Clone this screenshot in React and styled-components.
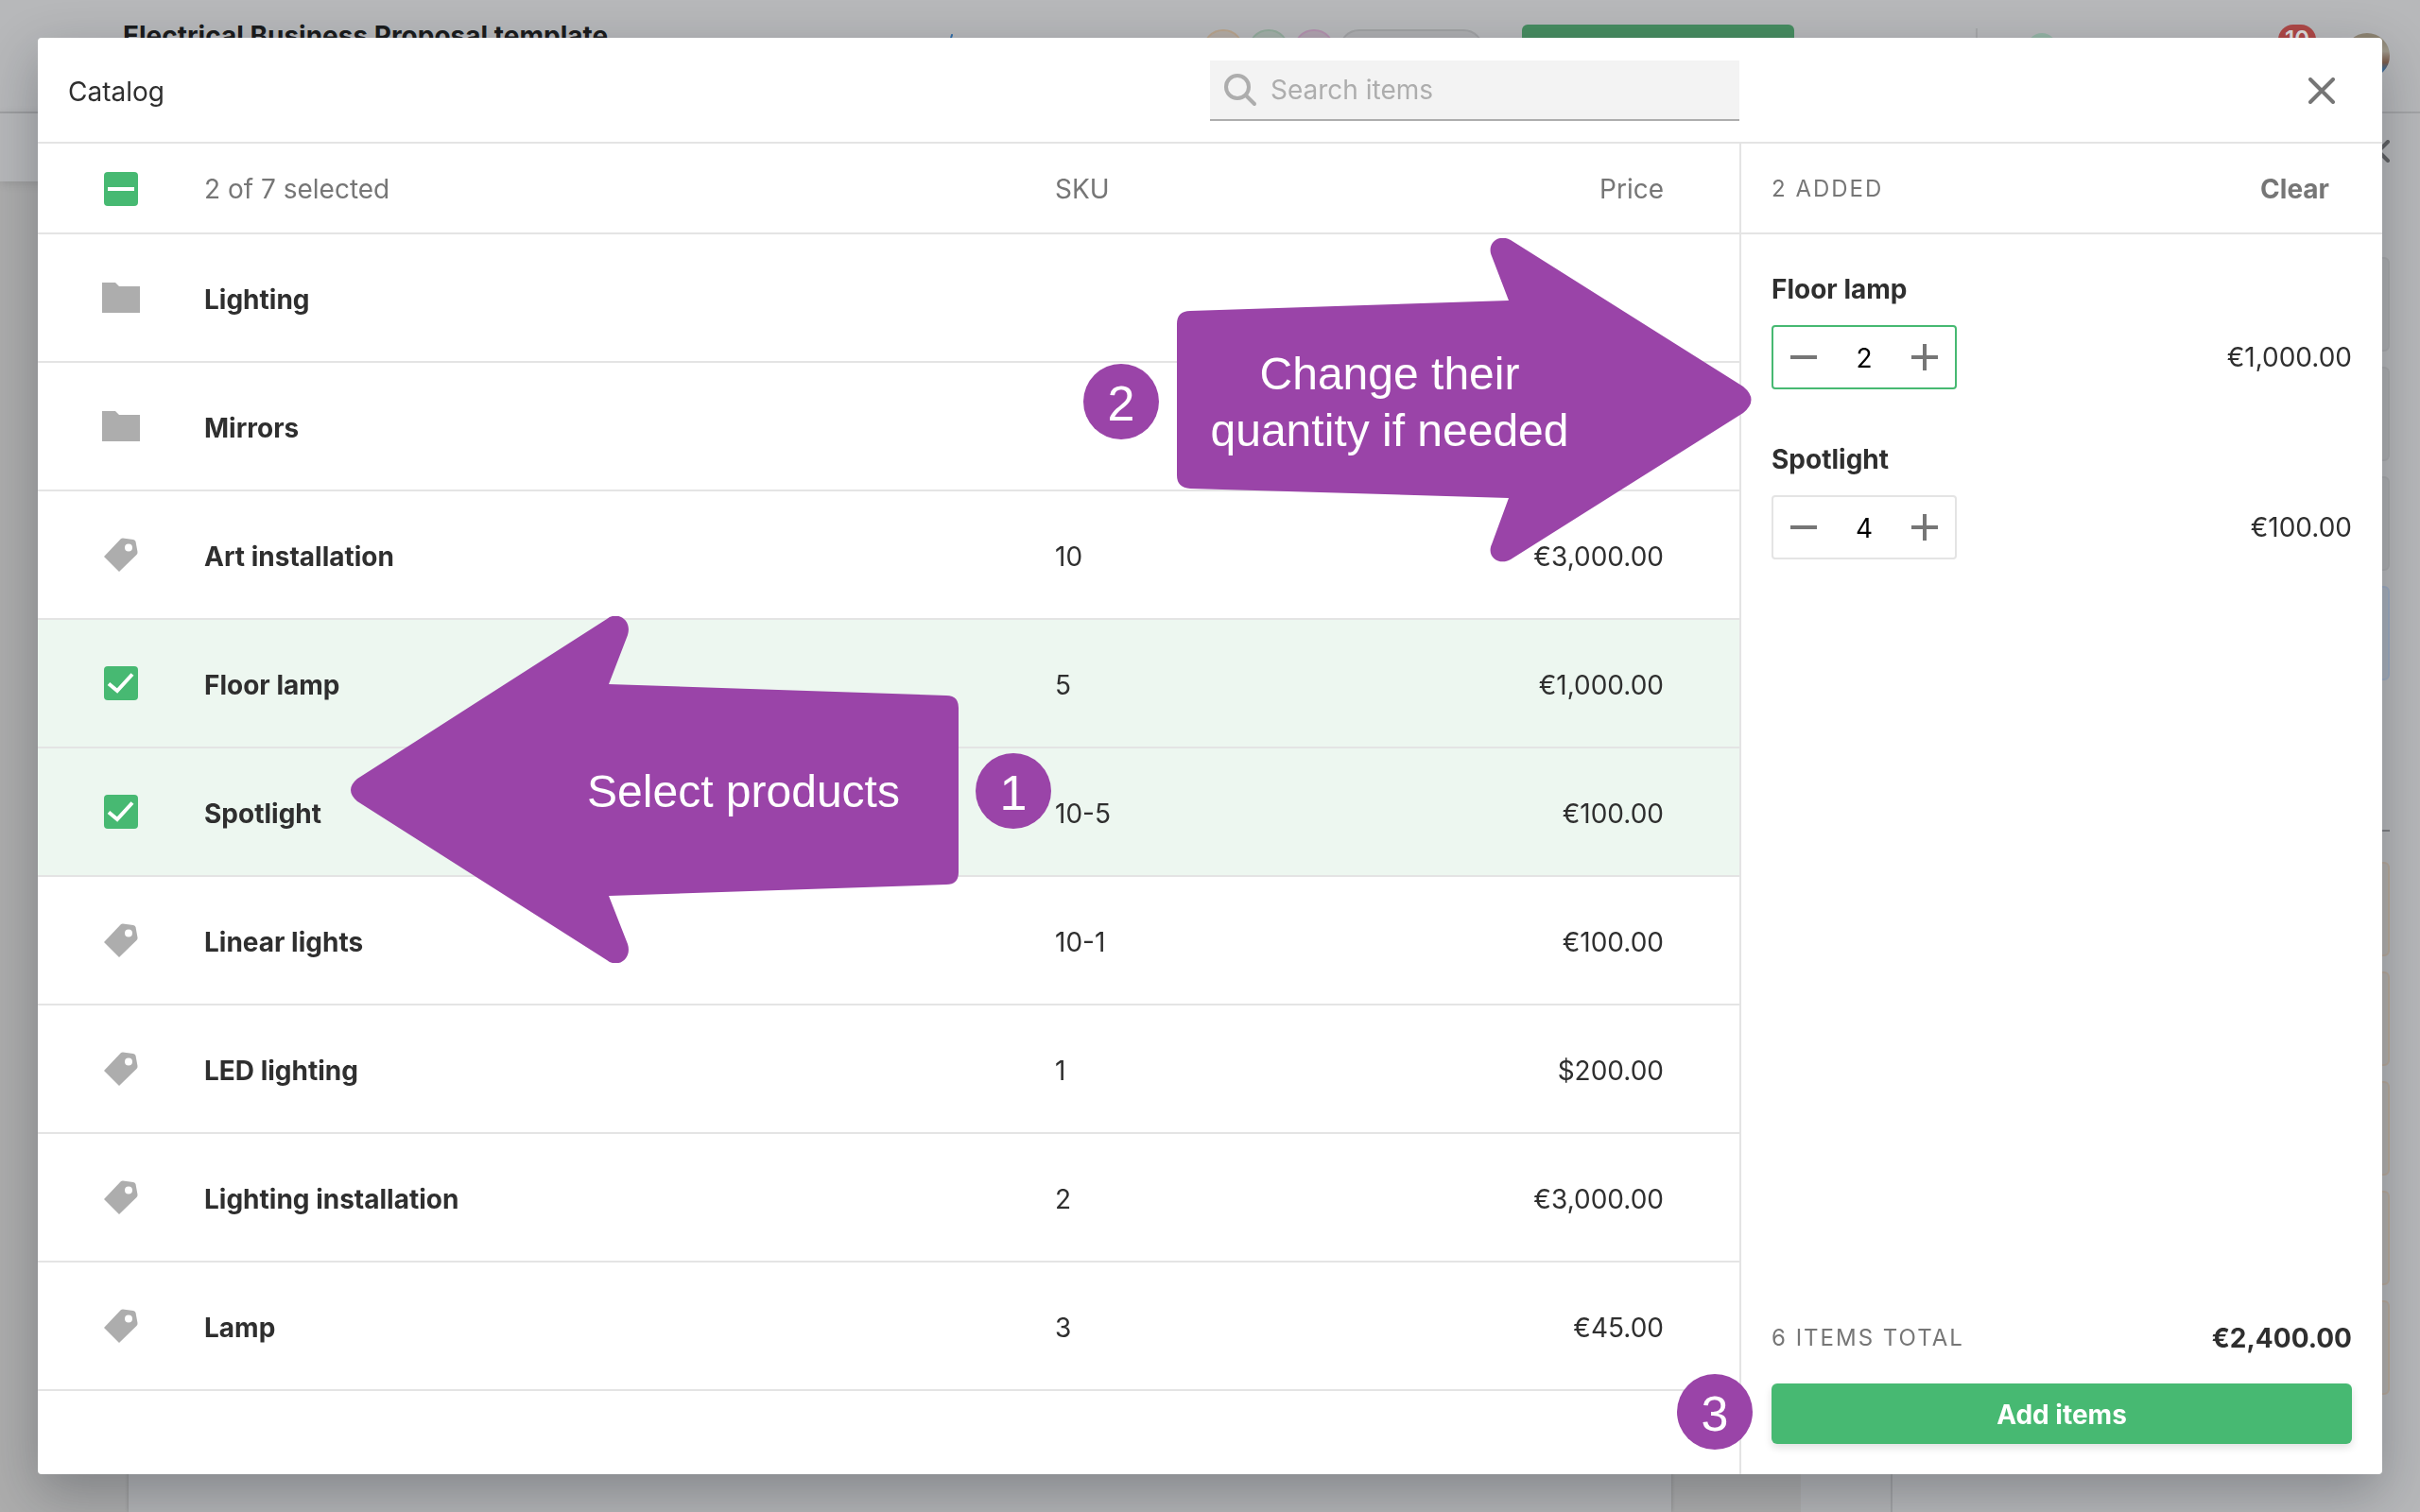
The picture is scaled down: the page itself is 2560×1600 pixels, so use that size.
import React, { useState } from 'react';
import styled, { createGlobalStyle } from 'styled-components'

const color = {
  text: '#2f2f2f',
  muted: '#767676',
  icon: '#adadad',
  line: '#e4e4e4',
  green: '#47b972',
  selected: '#edf7f0',
  purple: '#9a44a8',
}

const GlobalStyle = createGlobalStyle`
  * {
    box-sizing: border-box;
  }
  body {
    margin: 0;
    overflow: hidden;
    color: ${color.text};
    font-family: Inter, "Liberation Sans", sans-serif;
    font-size: 28px;
    line-height: 40px;
  }
  button, input {
    font: inherit;
    color: inherit;
    border: 0;
    padding: 0;
    margin: 0;
    background: none;
  }
`

/* ---------- editor behind the dialog ---------- */

const Editor = styled.div`
  height: 100vh;
  display: flex;
  flex-direction: column;
  isolation: isolate;
  background: #b7b8ba;
`
const TopBar = styled.header`
  height: 120px;
  flex: none;
  display: flex;
  align-items: flex-start;
  padding: 16px 32px 0 130px;
  border-bottom: 2px solid #a3a4a6;
  overflow: hidden;
`
const DocTitle = styled.div`
  width: 866px;
  padding-top: 2px;
  font-weight: 700;
  color: #1a1b1c;
`
const EditMark = styled.svg`
  width: 20px;
  height: 20px;
  margin-top: 20px;
`
const TopTools = styled.div`
  display: flex;
  align-items: flex-start;
  margin-left: auto;
  padding-top: 10px;
`
const Person = styled.span`
  width: 44px;
  height: 44px;
  margin: 5px 4px 0 0;
  border-radius: 50%;
  border: 2px solid ${p => p.$line};
  background: ${p => p.$fill};
`
const Pill = styled.span`
  width: 154px;
  height: 44px;
  margin: 5px 40px 0 0;
  border-radius: 22px;
  border: 2px solid #a1a2a4;
  background: #adaeb0;
`
const SendButton = styled.span`
  width: 288px;
  height: 64px;
  border-radius: 6px;
  background: #468c60;
`
const Divider = styled.span`
  width: 2px;
  height: 60px;
  margin: 4px 52px 0 192px;
  background: #a7a8aa;
`
const StatusDot = styled.span`
  width: 32px;
  height: 32px;
  margin: 9px 234px 0 0;
  border-radius: 50%;
  background: #94b5a5;
`
const Count = styled.span`
  width: 40px;
  height: 32px;
  margin-right: 30px;
  border-radius: 16px;
  background: #ae4746;
  color: #dcdcdc;
  font-size: 24px;
  font-weight: 600;
  line-height: 32px;
  text-align: center;
`
const Avatar = styled.span`
  width: 48px;
  height: 48px;
  margin-top: 9px;
  border-radius: 50%;
  background: linear-gradient(#8d8371 10%, #a09a8c 40%, #7b5b4a 65%, #3f6a94 80%);
`
const Workspace = styled.div`
  flex: 1;
  min-height: 0;
  display: flex;
`
const Canvas = styled.div`
  flex: 1;
  display: flex;
  flex-direction: column;
`
const FormatBar = styled.div`
  height: 72px;
  flex: none;
  background: #b7b8ba;
  box-shadow: 0 2px 10px rgba(0, 0, 0, 0.12);
  z-index: 1;
`
const Stage = styled.div`
  flex: 1;
  display: flex;
  padding: 0 94px 0 136px;
  background: linear-gradient(90deg, #adadad 1905px, #b4b5b7 1905px);
`
const Page = styled.div`
  flex: 1;
  margin-right: 138px;
  background: #b4b5b7;
  box-shadow: 0 0 4px rgba(0, 0, 0, 0.2);
`
const SidePanel = styled.aside`
  width: 560px;
  border-left: 2px solid #a3a4a6;
  padding: 28px 32px 0 0;
  display: flex;
  flex-direction: column;
  align-items: flex-end;
  gap: 16px;
`
const Field = styled.span`
  width: 480px;
  height: 100px;
  flex: none;
  border-radius: 6px;
  border: 2px solid ${p => p.$line};
  background: ${p => p.$fill};
`
const PanelClose = styled.svg`
  width: 24px;
  height: 24px;
  margin-bottom: 84px;
`
const PanelRule = styled.span`
  width: 480px;
  height: 2px;
  margin: 142px 0 16px;
  background: #7f8083;
`

/* ---------- dialog ---------- */

const Dialog = styled.section`
  position: fixed;
  inset: 40px;
  display: grid;
  grid-template-columns: minmax(0, 1fr) 680px;
  grid-template-rows: 112px minmax(0, 1fr);
  border-radius: 4px;
  background: #fff;
  box-shadow: 0 20px 56px rgba(20, 28, 36, 0.3);
`
const DialogHeader = styled.header`
  grid-column: 1 / -1;
  display: grid;
  grid-template-columns: minmax(0, 1fr) 680px;
  align-items: center;
  padding-top: 2px;
  border-bottom: 2px solid ${color.line};
`
const HeaderMain = styled.div`
  display: flex;
  align-items: center;
  justify-content: space-between;
  padding-left: 32px;
`
const Heading = styled.h1`
  margin: 0;
  padding-top: 2px;
  font-size: 28px;
  font-weight: 400;
`
const SearchBox = styled.label`
  width: 560px;
  height: 64px;
  display: flex;
  align-items: center;
  gap: 14px;
  padding-left: 14px;
  background: #f3f3f3;
  border-bottom: 2px solid ${color.icon};
  svg {
    width: 36px;
    height: 36px;
    flex: none;
  }
  input {
    flex: 1;
    outline: 0;
  }
  input::placeholder {
    color: ${color.icon};
    opacity: 1;
  }
`
const CloseButton = styled.button`
  justify-self: end;
  width: 28px;
  height: 28px;
  margin-right: 50px;
  svg {
    display: block;
  }
`
const List = styled.table`
  width: 100%;
  table-layout: fixed;
  align-self: start;
  border-collapse: separate;
  border-spacing: 0;
`
const HeadCell = styled.th`
  width: ${p => p.$width};
  height: 96px;
  padding: ${p => (p.$end ? '2px 80px 0 0' : '2px 0 0')};
  border-bottom: 2px solid ${color.line};
  color: ${color.muted};
  font-weight: 400;
  text-align: ${p => (p.$end ? 'right' : 'left')};
`
const Row = styled.tr`
  background: ${p => (p.$selected ? color.selected : 'transparent')};
`
const Cell = styled.td`
  height: 136px;
  padding: ${p => (p.$end ? '4px 80px 0 0' : '4px 0 0')};
  border-bottom: 2px solid ${color.line};
  font-weight: ${p => (p.$strong ? 700 : 400)};
  text-align: ${p => (p.$end ? 'right' : 'left')};
`
const MarkCell = styled(Cell)`
  padding: 0;
`
const Mark = styled.div`
  width: 40px;
  margin-left: 68px;
  display: flex;
  justify-content: center;
  svg {
    display: block;
  }
`
const CheckLabel = styled.label`
  display: grid;
  width: 36px;
  height: 36px;
  input, svg {
    grid-area: 1 / 1;
    width: 36px;
    height: 36px;
  }
  input {
    appearance: none;
    border-radius: 4px;
    background: ${color.green};
  }
  svg {
    pointer-events: none;
  }
`
const Cart = styled.aside`
  display: flex;
  flex-direction: column;
  border-left: 2px solid ${color.line};
`
const CartHead = styled.div`
  height: 96px;
  display: flex;
  align-items: center;
  justify-content: space-between;
  padding: 2px 56px 0 32px;
  border-bottom: 2px solid ${color.line};
`
const Caps = styled.span`
  color: ${color.muted};
  font-size: 24px;
  letter-spacing: 2px;
  text-transform: uppercase;
`
const ClearButton = styled.button`
  color: ${color.muted};
  font-weight: 700;
`
const CartItems = styled.div`
  flex: 1;
  display: flex;
  flex-direction: column;
  gap: 54px;
  padding: 38px 32px 0;
`
const CartItem = styled.div`
  display: grid;
  grid-template-columns: 1fr auto;
  align-items: center;
  row-gap: 18px;
`
const ItemName = styled.label`
  grid-column: 1 / -1;
  font-weight: 700;
`
const Stepper = styled.div`
  width: 196px;
  height: 68px;
  display: flex;
  align-items: center;
  justify-content: space-between;
  padding: 0 16px;
  border: 2px solid ${p => (p.$active ? color.green : color.line)};
  border-radius: 4px;
  button, svg {
    display: block;
    width: 32px;
    height: 32px;
  }
  input {
    width: 60px;
    padding-top: 2px;
    color: #000;
    text-align: center;
    outline: 0;
  }
`
const CartFoot = styled.footer`
  display: flex;
  flex-direction: column;
  gap: 28px;
  padding: 0 32px 32px;
`
const TotalLine = styled.div`
  display: flex;
  align-items: center;
  justify-content: space-between;
`
const Total = styled.span`
  font-weight: 700;
`
const AddButton = styled.button`
  height: 64px;
  padding-top: 2px;
  border-radius: 6px;
  background: ${color.green};
  color: #fff;
  font-weight: 700;
  box-shadow: 0 4px 8px rgba(0, 0, 0, 0.12);
`

/* ---------- callouts floating over the dialog ---------- */

const Callout = styled.div`
  position: absolute;
  left: ${p => p.$x}px;
  top: ${p => p.$y}px;
  width: ${p => p.$w}px;
  height: ${p => p.$h}px;
  display: grid;
  color: #fff;
  font-family: "Liberation Sans", Arial, sans-serif;
  font-size: 48px;
  line-height: 60px;
  text-align: center;
  > * {
    grid-area: 1 / 1;
  }
`
const CalloutText = styled.p`
  margin: 0;
  align-self: center;
  padding: ${p => p.$pad};
`
const Step = styled.div`
  position: absolute;
  left: ${p => p.$x}px;
  top: ${p => p.$y}px;
  width: 80px;
  height: 80px;
  border-radius: 50%;
  background: ${color.purple};
  color: #fff;
  font-family: "Liberation Sans", Arial, sans-serif;
  font-size: 52px;
  line-height: 84px;
  text-align: center;
`

function Cross({ stroke }) {
  return (
    <svg width='28' height='28' viewBox='0 0 28 28' fill='none' stroke={stroke} strokeWidth='4' strokeLinecap='round'>
      <path d='M2 2 26 26M26 2 2 26' />
    </svg>
  )
}

function FolderIcon() {
  return (
    <svg width='40' height='32' viewBox='0 0 40 32'>
      <path fill={color.icon} d='M0 0H14L18 4H40V32H0Z' />
    </svg>
  )
}

function TagIcon() {
  return (
    <svg width='36' height='36' viewBox='0 0 36 36'>
      <path
        fill={color.icon}
        fillRule='evenodd'
        d='M0 20 17.500 1.500Q18.500 .5 20 .5L31 2Q33 2.300 33.500 4L35.500 15Q35.700 17 34.500 18L16 36ZM26 6.500A4 4 0 1 0 26 14.500 4 4 0 1 0 26 6.500Z'
      />
    </svg>
  )
}

function Check({ label, partial, checked, onChange }) {
  return (
    <CheckLabel>
      <input type='checkbox' aria-label={label} checked={checked} onChange={onChange} />
      <svg viewBox='0 0 36 36' fill='none' stroke='#fff' strokeWidth='4'>
        <path d={partial ? 'M4 18H32' : 'M5 18.500 14 26 30 8.500'} />
      </svg>
    </CheckLabel>
  )
}

const catalog = [
  { name: 'Lighting', folder: true },
  { name: 'Mirrors', folder: true },
  { name: 'Art installation', sku: '10', price: '€3,000.00' },
  { name: 'Floor lamp', sku: '5', price: '€1,000.00' },
  { name: 'Spotlight', sku: '10-5', price: '€100.00' },
  { name: 'Linear lights', sku: '10-1', price: '€100.00' },
  { name: 'LED lighting', sku: '1', price: '$200.00' },
  { name: 'Lighting installation', sku: '2', price: '€3,000.00' },
  { name: 'Lamp', sku: '3', price: '€45.00' },
]

function CatalogList({ cart }) {
  return (
    <List>
      <thead>
        <tr>
          <HeadCell $width='176px'>
            <Mark><Check label='Select all' partial checked onChange={() => {}} /></Mark>
          </HeadCell>
          <HeadCell $width='50%'>2 of 7 selected</HeadCell>
          <HeadCell>SKU</HeadCell>
          <HeadCell $end>Price</HeadCell>
        </tr>
      </thead>
      <tbody>
        {catalog.map(item => {
          const selected = cart[item.name] !== undefined
          return (
            <Row key={item.name} $selected={selected}>
              <MarkCell>
                <Mark>
                  {item.folder && <FolderIcon />}
                  {!item.folder && !selected && <TagIcon />}
                  {selected && <Check label={item.name} checked onChange={() => {}} />}
                </Mark>
              </MarkCell>
              <Cell $strong>{item.name}</Cell>
              <Cell>{item.sku}</Cell>
              <Cell $end>{item.price}</Cell>
            </Row>
          )
        })}
      </tbody>
    </List>
  )
}

function CartRow({ name, price, count, active, onCount }) {
  const id = 'count-' + name.replace(' ', '-')
  return (
    <CartItem>
      <ItemName htmlFor={id}>{name}</ItemName>
      <Stepper $active={active}>
        <button type='button' aria-label={'Less ' + name} onClick={() => onCount(count - 1)}>
          <svg viewBox='0 0 32 32' stroke={color.muted} strokeWidth='4'><path d='M2 16H30' /></svg>
        </button>
        <input id={id} value={count} onChange={e => onCount(Number(e.target.value) || 0)} />
        <button type='button' aria-label={'More ' + name} onClick={() => onCount(count + 1)}>
          <svg viewBox='0 0 32 32' stroke={color.muted} strokeWidth='4'><path d='M2 16H30M16 2V30' /></svg>
        </button>
      </Stepper>
      <span>{price}</span>
    </CartItem>
  )
}

function EditorBackdrop() {
  const grey = { $line: '#a9aaac', $fill: '#aeafb1' }
  const sand = { $line: '#b8aa9c', $fill: '#b3b0ad' }
  return (
    <Editor>
      <TopBar>
        <DocTitle>Electrical Business Proposal template</DocTitle>
        <EditMark viewBox='0 0 20 20' stroke='#2f6ca8' strokeWidth='2' strokeLinecap='round'>
          <path d='M11 1 7 14' />
        </EditMark>
        <TopTools>
          <Person $line='#b9a48d' $fill='#b3aca5' />
          <Person $line='#92aa9b' $fill='#a3afa8' />
          <Person $line='#b391ae' $fill='#b0a3af' />
          <Pill />
          <SendButton />
          <Divider />
          <StatusDot />
          <Count>10</Count>
          <Avatar />
        </TopTools>
      </TopBar>
      <Workspace>
        <Canvas>
          <FormatBar />
          <Stage><Page /></Stage>
        </Canvas>
        <SidePanel>
          <PanelClose viewBox='0 0 24 24' stroke='#606163' strokeWidth='4' strokeLinecap='round'>
            <path d='M2 2 22 22M22 2 2 22' />
          </PanelClose>
          <Field {...grey} />
          <Field {...grey} />
          <Field {...grey} />
          <Field $line='#9dabc0' $fill='#a8afba' />
          <PanelRule />
          <Field {...sand} />
          <Field {...sand} />
          <Field {...sand} />
          <Field {...sand} />
          <Field {...sand} />
        </SidePanel>
      </Workspace>
    </Editor>
  )
}

function App() {
  const [cart, setCart] = useState({ 'Floor lamp': 2, Spotlight: 4 })
  const setCount = name => count => setCart({ ...cart, [name]: Math.max(0, count) })

  return (
    <>
      <GlobalStyle />
      <EditorBackdrop />
      <Dialog role='dialog' aria-label='Catalog'>
        <DialogHeader>
          <HeaderMain>
            <Heading>Catalog</Heading>
            <SearchBox>
              <svg viewBox='0 0 36 36' fill='none' stroke={color.icon} strokeWidth='4' strokeLinecap='round'>
                <circle cx='15' cy='15' r='12' />
                <path d='M24 24 33 33' />
              </svg>
              <input type='text' aria-label='Search items' placeholder='Search items' />
            </SearchBox>
          </HeaderMain>
          <CloseButton type='button' aria-label='Close'><Cross stroke={color.muted} /></CloseButton>
        </DialogHeader>

        <CatalogList cart={cart} />

        <Cart>
          <CartHead>
            <Caps>2 added</Caps>
            <ClearButton type='button'>Clear</ClearButton>
          </CartHead>
          <CartItems>
            <CartRow name='Floor lamp' price='€1,000.00' count={cart['Floor lamp']} active onCount={setCount('Floor lamp')} />
            <CartRow name='Spotlight' price='€100.00' count={cart.Spotlight} onCount={setCount('Spotlight')} />
          </CartItems>
          <CartFoot>
            <TotalLine>
              <Caps>6 items total</Caps>
              <Total>€2,400.00</Total>
            </TotalLine>
            <AddButton type='button'>Add items</AddButton>
          </CartFoot>
        </Cart>

        <Callout $x={1205} $y={212} $w={608} $h={343}>
          <svg viewBox='0 0 608 343' fill={color.purple}>
            <path d='M0 91Q0 77 14 77L351 66 333 19C327 5 341-5 353 2L599 157Q616 171 599 185L353 340C341 347 327 337 333 324L351 275 14 265Q0 264 0 251Z' />
          </svg>
          <CalloutText $pad='4px 158px 0 0'>Change their<br />quantity if needed</CalloutText>
        </Callout>
        <Step $x={1106} $y={345}>2</Step>

        <Callout $x={331} $y={612} $w={643} $h={367}>
          <svg viewBox='0 0 643 367' fill={color.purple}>
            <path d='M643 97Q643 84 630 84L273 72 293 20C298 4 282-6 271 3L7 172Q-7 184 7 196L271 364C282 373 298 363 293 347L273 296 630 284Q643 284 643 271Z' />
          </svg>
          <CalloutText $pad='4px 0 0 188px'>Select products</CalloutText>
        </Callout>
        <Step $x={992} $y={757}>1</Step>

        <Step $x={1734} $y={1414}>3</Step>
      </Dialog>
    </>
  );
}

export default App;
